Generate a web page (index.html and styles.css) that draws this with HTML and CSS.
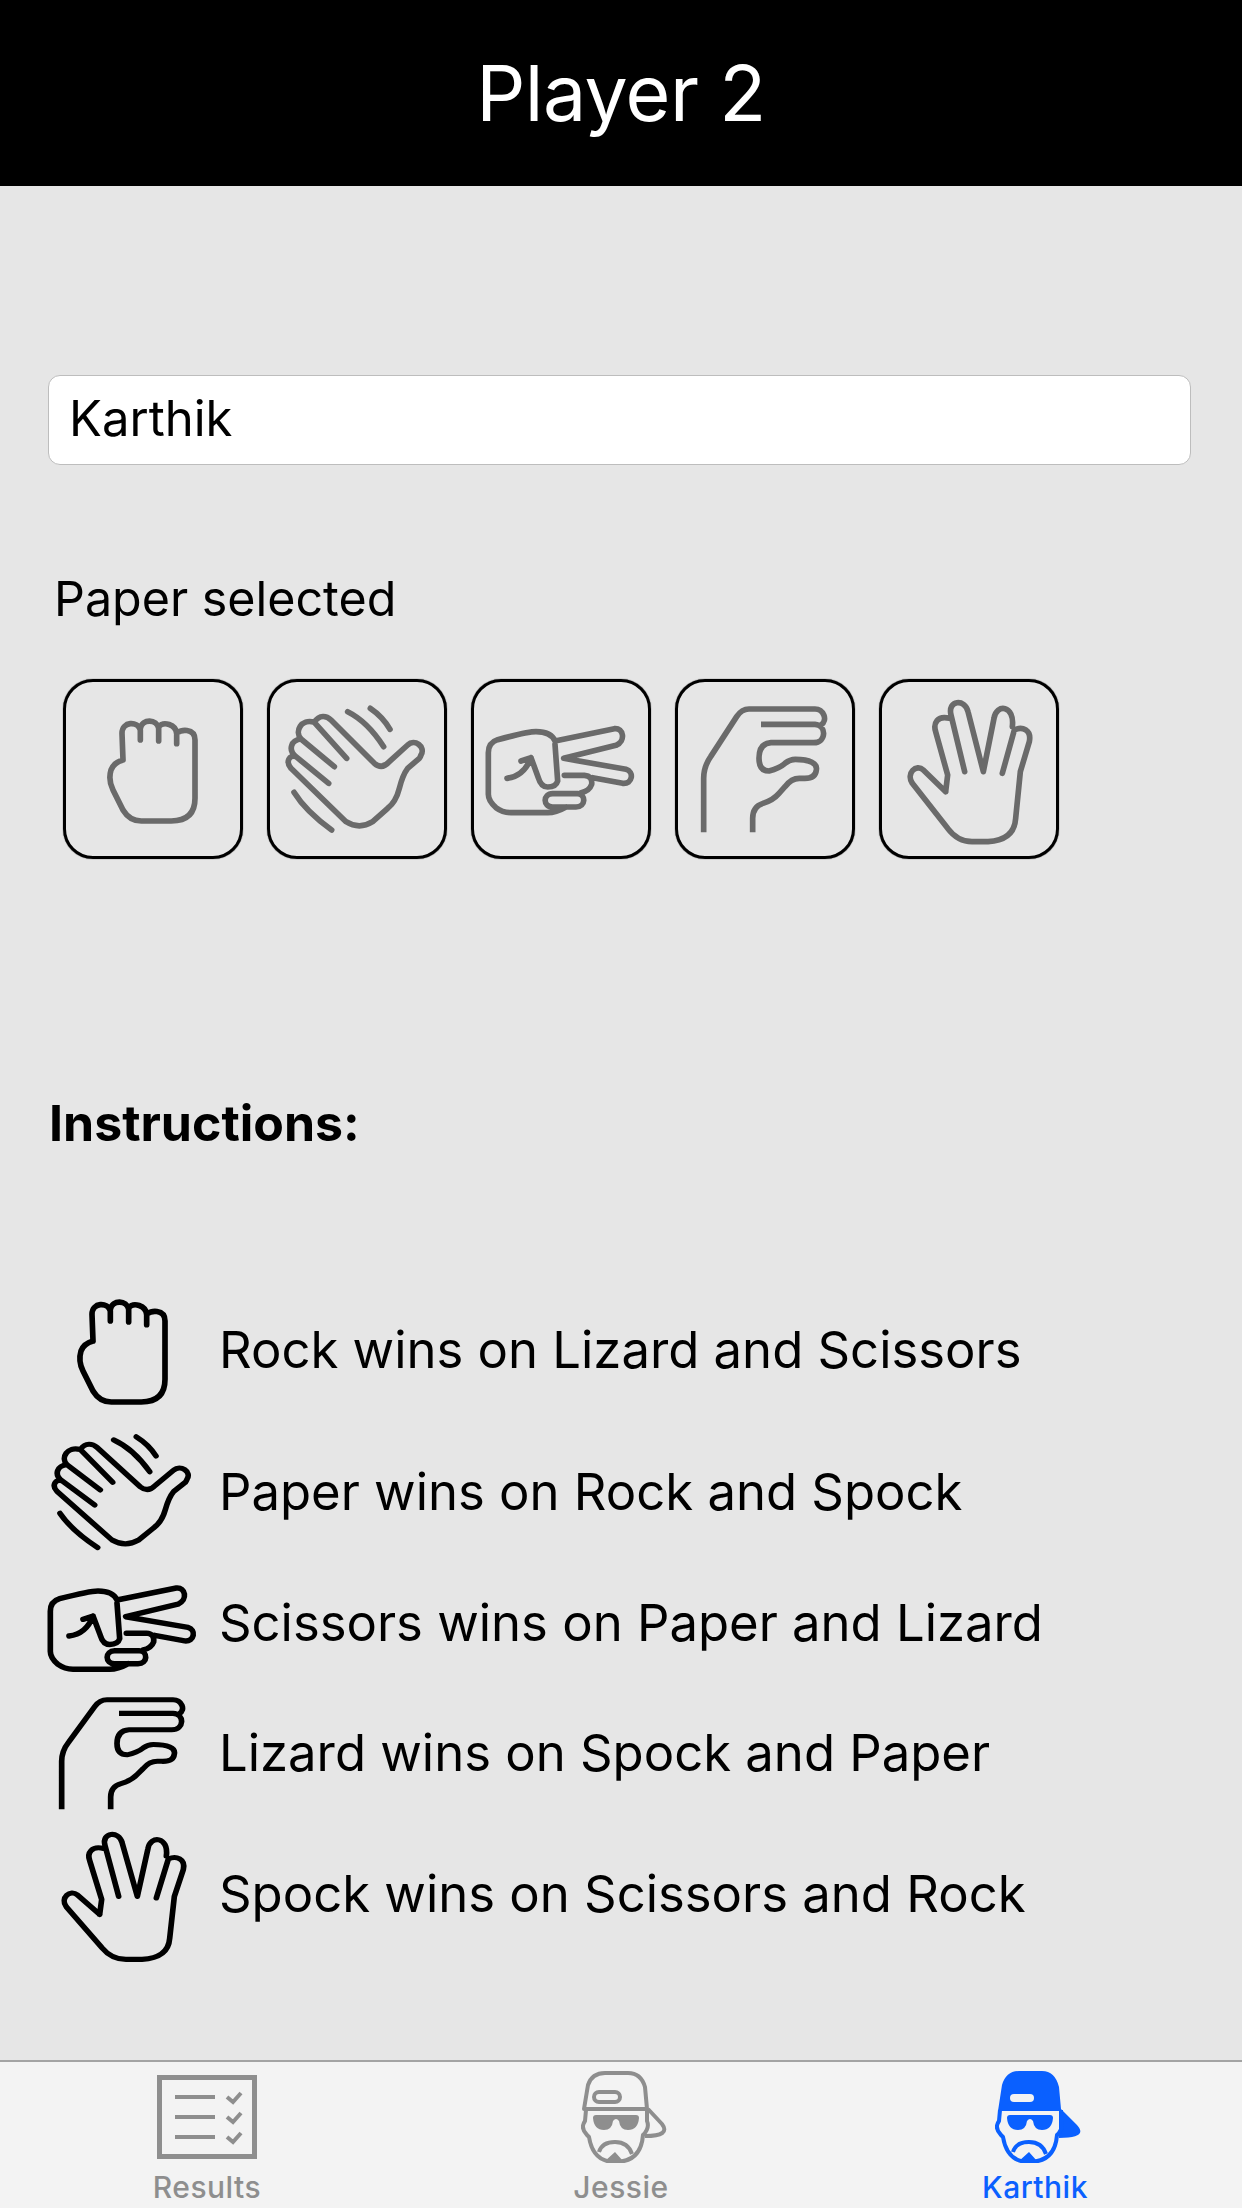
FILE: index.html
```html
<!DOCTYPE html>
<html lang="en">

<head>
    <meta charset="utf-8">
    <title>Player 2</title>
    <link rel="stylesheet" href="styles.css">
</head>

<body>
    <svg class="defs" width="0" height="0">
        <symbol id="rock" viewBox="70 55 537 537" preserveAspectRatio="none">
            <path d="M250 295 L247 215 C247 178 295 178 302 205 V235 M302 200 C308 170 352 172 357 200 V238 M357 195 C372 178 408 188 411 215 V246 M411 215 C420 203 466 198 466 235 V410 Q466 478 395 478 H305 Q270 478 250 445 L220 385 Q205 355 214 325 Q222 303 250 295" />
        </symbol>
        <symbol id="paper" viewBox="683 55 537 537" preserveAspectRatio="none">
            <path d="M825 182 C840 158 862 162 875 175 L1005 305 Q1028 325 1050 300 L1105 250 C1125 230 1160 255 1145 280 Q1143 286 1140 290 L1105 320 Q1090 340 1080 380 Q1070 420 1045 440 L1000 480 Q960 505 920 480 L755 320 C738 300 750 278 770 285 L868 365 M770 285 C745 265 755 235 785 232 L885 315 M785 232 C765 210 785 170 825 182 L922 290 M925 150 Q985 180 1033 255 M993 140 Q1030 165 1052 203 M764 392 Q800 450 877 505" />
        </symbol>
        <symbol id="scissors" viewBox="10 -3 537 537" preserveAspectRatio="none">
            <path d="M262 180 Q250 152 205 152 Q180 152 90 176 Q62 185 62 215 V340 Q62 360 85 380 Q105 395 130 395 H240 Q265 395 295 378 M262 180 L440 143 C468 140 475 180 445 193 L288 232 L475 265 C500 272 495 310 465 307 L375 290 M262 190 L270 300 Q265 318 240 318 Q220 318 212 290 L190 230 L160 240 M190 230 Q170 285 118 292 M290 283 H350 Q375 285 372 310 Q365 330 340 335 M255 338 H330 C355 340 355 378 325 378 H255 C225 378 225 338 255 338" />
        </symbol>
        <symbol id="lizard" viewBox="0 0 537 537" preserveAspectRatio="none">
            <path class="butt" d="M86 457 V295 Q86 260 107 230 L185 110 Q200 87 222 87 H420 C445 87 460 120 438 135 M258 133 H420 C455 135 455 188 416 188 H288 Q252 190 252 235 Q252 273 282 273 Q313 265 330 250 Q345 238 361 238 C405 238 428 250 424 270 C422 290 405 296 385 295 H373 Q349 295 330 320 L312 340 Q295 360 264 370 Q233 380 233 415 V457" />
        </symbol>
        <symbol id="spock" viewBox="0 0 537 537" preserveAspectRatio="none">
            <path d="M200 335 L133 270 C112 250 80 280 100 310 L206 445 Q236 485 279 485 H327 Q406 480 410 415 L424 275 L451 185 C458 150 430 138 406 150 L370 280 M400 140 C408 75 352 70 345 115 L313 275 L267 95 C258 55 205 60 216 105 L257 275 M212 115 C175 105 162 130 170 155 L206 285 L200 335" />
        </symbol>
        <symbol id="results" viewBox="0 0 100 84">
            <rect x="2.5" y="2.5" width="95" height="79" />
            <path class="check" d="M18 22 H58 M18 42 H58 M18 62 H58" />
            <path class="check" d="M70 22 L76 27 L84 18 M70 42 L76 47 L84 38 M70 62 L76 67 L84 58" />
        </symbol>
        <symbol id="cap-outline" viewBox="0 0 86 92">
            <path d="M3 38 L7 14 Q11 2 24 2 H47 Q60 2 64 16 L66 38 Z" />
            <rect x="13" y="21" width="26" height="10" rx="5" />
            <path d="M67 38 L81 53 Q90 65 64 65" />
            <path d="M5 39 L4 50 Q-1 57 6 64 L8 66 Q12 91 34 91 Q60 91 62 64 Q69 57 66 50 L66 39" />
            <path d="M18 81 Q21 71 34 71 Q47 71 51 83" />
            <path class="solid" d="M15 44 H55 Q58 44 58 47 Q57 59 47 59 Q39 59 38 50 Q35 46 32 50 Q31 59 23 59 Q13 59 12 47 Q12 44 15 44Z M24 90 L34 81 L42 90Z" />
        </symbol>
        <symbol id="cap-solid" viewBox="0 0 86 92">
            <path class="solid" d="M3 40 L7 14 Q11 0 24 0 H47 Q60 0 64 16 L66 38 L81 53 Q95 67 64 67 V40 Z" />
            <rect class="gap" x="15" y="23" width="24" height="8" rx="4" />
            <path d="M5 39 L4 50 Q-1 57 6 64 L8 66 Q12 91 34 91 Q60 91 62 64 Q69 57 66 50 L66 39" />
            <path d="M18 81 Q21 71 34 71 Q47 71 51 83" />
            <path class="solid" d="M15 44 H55 Q58 44 58 47 Q57 59 47 59 Q39 59 38 50 Q35 46 32 50 Q31 59 23 59 Q13 59 12 47 Q12 44 15 44Z M24 90 L34 81 L42 90Z" />
        </symbol>
    </svg>

    <header class="title-bar">Player 2</header>

    <main class="content">
        <div class="name-field">Karthik</div>
        <div class="status">Paper selected</div>

        <div class="choices">
            <button class="choice"><svg class="hand"><use href="#rock" /></svg></button>
            <button class="choice"><svg class="hand"><use href="#paper" /></svg></button>
            <button class="choice"><svg class="hand"><use href="#scissors" /></svg></button>
            <button class="choice"><svg class="hand"><use href="#lizard" /></svg></button>
            <button class="choice"><svg class="hand"><use href="#spock" /></svg></button>
        </div>

        <h2 class="instructions">Instructions:</h2>

        <ul class="rules">
            <li class="rule rule-rock"><svg class="hand"><use href="#rock" /></svg><span>Rock wins on Lizard and Scissors</span></li>
            <li class="rule rule-paper"><svg class="hand"><use href="#paper" /></svg><span>Paper wins on Rock and Spock</span></li>
            <li class="rule rule-scissors"><svg class="hand"><use href="#scissors" /></svg><span>Scissors wins on Paper and Lizard</span></li>
            <li class="rule rule-lizard"><svg class="hand"><use href="#lizard" /></svg><span>Lizard wins on Spock and Paper</span></li>
            <li class="rule rule-spock"><svg class="hand"><use href="#spock" /></svg><span>Spock wins on Scissors and Rock</span></li>
        </ul>
    </main>

    <nav class="tabs">
        <div class="tab">
            <div class="tab-icon"><svg class="ic-results"><use href="#results" /></svg></div>
            <div class="tab-label">Results</div>
        </div>
        <div class="tab">
            <div class="tab-icon"><svg class="ic-face"><use href="#cap-outline" /></svg></div>
            <div class="tab-label">Jessie</div>
        </div>
        <div class="tab active">
            <div class="tab-icon"><svg class="ic-face"><use href="#cap-solid" /></svg></div>
            <div class="tab-label">Karthik</div>
        </div>
    </nav>
</body>

</html>
```

FILE: styles.css
```css
html, body {
    margin: 0;
    height: 2208px;
    overflow: hidden;
}

body {
    display: flex;
    flex-direction: column;
    background-color: #E6E6E6;
    color: #000;
    font-family: Inter, "Liberation Sans", sans-serif;
}

.defs {
    position: absolute;
}

.title-bar {
    height: 186px;
    flex: none;
    display: flex;
    align-items: center;
    justify-content: center;
    background-color: #000;
    color: #fff;
    font-size: 77px;
    letter-spacing: -0.6px;
}

.content {
    flex: 1;
    padding: 189px 51px 0 48px;
}

.name-field {
    height: 88px;
    line-height: 86px;
    padding-left: 20px;
    border: 1px solid #BDBDBD;
    border-radius: 12px;
    background-color: #fff;
    font-size: 49px;
}

.status {
    margin: 104px 0 0 6px;
    height: 60px;
    line-height: 60px;
    font-size: 48.4px;
}

.choices {
    display: flex;
    gap: 24px;
    margin: 50px 0 0 15px;
}

.choice {
    width: 180px;
    height: 180px;
    padding: 0;
    border: 3px solid #000;
    border-radius: 30px;
    box-shadow: 0 0 1px #000;
    background: none;
    box-sizing: border-box;
    color: #6A6A6A;
}

.choice .hand {
    margin: -3px;
}

.hand {
    display: block;
    flex: none;
    width: 179px;
    height: 179px;
    fill: none;
    stroke: currentColor;
    stroke-width: 17;
    stroke-linecap: round;
    stroke-linejoin: round;
}

.butt {
    stroke-linecap: butt;
}

.instructions {
    margin: 234px 0 0 1px;
    height: 60px;
    line-height: 60px;
    font-size: 50px;
    font-weight: 700;
}

.rules {
    list-style: none;
    margin: 124px 0 0;
    padding: 0;
}

.rule {
    display: flex;
    align-items: center;
    font-size: 50.8px;
    line-height: 60px;
}

.rule .hand {
    margin: 0 7px 0 -15px;
}

.rule-rock { height: 146px; }
.rule-paper { height: 138px; }
.rule-scissors { height: 124px; }
.rule-lizard { height: 136px; }
.rule-spock { height: 146px; }

.rule-paper .hand { height: 163px; }
.rule-scissors .hand { height: 173px; margin-top: 8px; }
.rule-lizard .hand { height: 159px; }
.rule-spock .hand { height: 161px; }

.tabs {
    flex: none;
    height: 146px;
    display: flex;
    border-top: 2px solid #A3A3A3;
    background-color: #F3F3F3;
}

.tab {
    flex: 1;
    display: flex;
    flex-direction: column;
    align-items: center;
    padding-top: 7px;
    color: #8E8E8E;
}

.tab.active {
    color: #0A60FF;
}

.tab-icon {
    height: 96px;
    display: flex;
    align-items: center;
    justify-content: center;
}

.tab-label {
    margin-top: 4px;
    height: 36px;
    line-height: 36px;
    font-size: 30px;
    font-weight: 500;
    letter-spacing: 0.5px;
}

.ic-results {
    width: 100px;
    height: 84px;
    fill: none;
    stroke: currentColor;
    stroke-width: 5;
}

.check {
    stroke-width: 4;
}

.ic-face {
    width: 86px;
    height: 92px;
    margin-left: 6px;
    overflow: visible;
    fill: none;
    stroke: currentColor;
    stroke-width: 4;
    stroke-linejoin: round;
}

.solid {
    fill: currentColor;
    stroke: none;
}

.gap {
    fill: #F3F3F3;
    stroke: none;
}
```
